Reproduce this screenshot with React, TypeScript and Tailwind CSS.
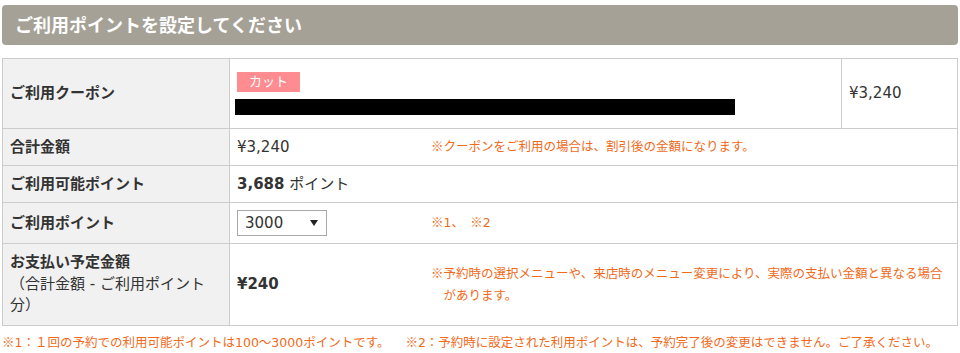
import React from "react";

const font = "font-['DejaVu_Sans','Noto_Sans_CJK_JP',sans-serif]";

// reference mark in full width, as the Japanese font draws it
const K = () => <span className="font-['Noto_Sans_CJK_JP',sans-serif]">※</span>;

const Label = ({ children, h }: { children: React.ReactNode; h: string }) => (
  <div className={"flex items-center bg-[#f1f1f1] border-r border-b border-[#cccccc] pl-[7px] pr-[8px] text-[15px] font-bold text-[#333333] " + h}>
    {children}
  </div>
);

export default function App() {
  const [points, setPoints] = React.useState("3000");
  return (
    <div className={"bg-white w-[960px] h-[353px] pt-[5px] text-[#333333] " + font}>
      <div className="ml-[2px] w-[956px]">
        <div className="h-[40px] flex items-center bg-[#a5a197] rounded-[4px] pl-[13px]">
          <h2 className="text-white text-[18px] font-bold">ご利用ポイントを設定してください</h2>
        </div>

        <div className="mt-[13px] grid grid-cols-[227px_612px_1fr] border-t border-l border-[#cccccc]">
          <Label h="h-[70px]">ご利用クーポン</Label>
          <div className="flex flex-col justify-center gap-[7px] pl-[5px] border-r border-b border-[#cccccc]">
            <span className="self-start ml-[2px] h-[20px] px-[12px] flex items-center bg-[#ff8c91] text-white text-[13px]">カット</span>
            <div className="w-[500px] h-[16px] bg-black" />
          </div>
          <div className="flex items-center pl-[7px] text-[15px] border-r border-b border-[#cccccc]">¥3,240</div>

          <Label h="h-[37px]">合計金額</Label>
          <div className="col-span-2 flex items-center pl-[7px] border-r border-b border-[#cccccc]">
            <span className="w-[194px] shrink-0 text-[15px]">¥3,240</span>
            <span className="text-[12.5px] text-[#f06a1a]"><K />クーポンをご利用の場合は、割引後の金額になります。</span>
          </div>

          <Label h="h-[37px]">ご利用可能ポイント</Label>
          <div className="col-span-2 flex items-center pl-[7px] text-[15px] border-r border-b border-[#cccccc]">
            <span className="font-bold">3,688</span>
            <span>&nbsp;ポイント</span>
          </div>

          <Label h="h-[41px]">ご利用ポイント</Label>
          <div className="col-span-2 flex items-center pl-[7px] border-r border-b border-[#cccccc]">
            <div className="w-[194px] shrink-0">
              <div className="relative w-[90px] h-[26px]">
                <select
                  value={points}
                  onChange={e => setPoints(e.target.value)}
                  className={"appearance-none w-full h-full border border-[#a9a9a9] bg-white pl-[7px] text-[15px] text-[#333333] outline-none " + font}
                >
                  <option value="3000">3000</option>
                  <option value="2000">2000</option>
                  <option value="1000">1000</option>
                  <option value="100">100</option>
                </select>
                <svg className="absolute right-[9px] top-[10px] pointer-events-none" width="8" height="6" viewBox="0 0 8 6">
                  <path d="M0 0 H8 L4 6 Z" fill="#222222" />
                </svg>
              </div>
            </div>
            <span className="text-[12.5px] text-[#f06a1a]"><K />1、　<K />2</span>
          </div>

          <Label h="h-[82px]">
            <div className="leading-[21.5px]">
              お支払い予定金額
              <br />
              <span className="font-normal">（合計金額 - ご利用ポイント分）</span>
            </div>
          </Label>
          <div className="col-span-2 flex items-center pl-[7px] pr-[8px] border-r border-b border-[#cccccc]">
            <span className="w-[194px] shrink-0 text-[15px] font-bold">¥240</span>
            <p className="text-[12.5px] leading-[22px] text-[#f06a1a] pl-[1em] -indent-[1em]">
              <K />予約時の選択メニューや、来店時のメニュー変更により、実際の支払い金額と異なる場合があります。
            </p>
          </div>
        </div>

        <p className="mt-[6px] text-[12.5px] leading-[20px] text-[#f06a1a] whitespace-nowrap">
          <span><K />1：１回の予約での利用可能ポイントは100～3000ポイントです。</span>
          <span className="ml-[16px]"><K />2：予約時に設定された利用ポイントは、予約完了後の変更はできません。ご了承ください。</span>
        </p>
      </div>
    </div>
  );
}
